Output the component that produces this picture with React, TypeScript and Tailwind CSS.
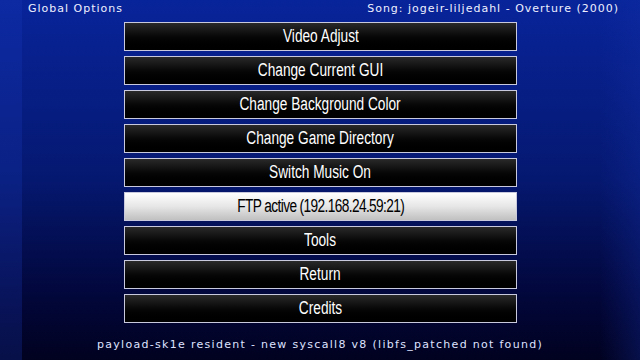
const items = [
  'Video Adjust',
  'Change Current GUI',
  'Change Background Color',
  'Change Game Directory',
  'Switch Music On',
  'FTP active (192.168.24.59:21)',
  'Tools',
  'Return',
  'Credits',
]

const selected = 5

export default function App() {
  return (
    <div className="relative w-[640px] h-[360px] overflow-hidden bg-gradient-to-b from-[#08249a] via-[#051870] to-[#010220]">
      {/* side glow */}
      <div className="absolute inset-y-0 left-0 w-[22px] bg-[#1a3cc0]/25 pointer-events-none" />
      <div className="absolute inset-y-0 right-0 w-[40px] bg-gradient-to-l from-[#1430a8]/30 to-transparent pointer-events-none" />
      <div className="relative flex flex-col h-full">
        <div className="flex justify-between pl-[28px] pr-[21px] pt-[1px] h-[22px] text-[11px] tracking-[1px] text-[#eef0ff] font-['DejaVu_Sans',sans-serif]">
          <span>Global Options</span>
          <span>Song: jogeir-liljedahl - Overture (2000)</span>
        </div>
        <div className="flex flex-col gap-[5px] pl-[124px] w-[517px]">
          {items.map((label, i) => (
            <div
              key={label}
              className={`h-[29px] flex items-center justify-center border-[1.5px] border-[#c9c9dd] ${
                i === selected
                  ? 'bg-gradient-to-b from-[#ffffff] via-[#e6e6e6] to-[#c0c0c0] text-black'
                  : 'bg-gradient-to-b from-[#2a2a2a] via-[#080808] to-[#000000] text-white'
              }`}
            >
              <span
                className={`inline-block whitespace-nowrap scale-x-[0.76] text-[18px] font-['Liberation_Sans',sans-serif] ${
                  i === selected ? 'tracking-[-0.8px]' : ''
                }`}
              >
                {label}
              </span>
            </div>
          ))}
        </div>
        <div className="mt-[14px] text-center text-[11px] tracking-[1.3px] text-[#dfe2ff] font-['DejaVu_Sans',sans-serif]">
          payload-sk1e resident - new syscall8 v8 (libfs_patched not found)
        </div>
      </div>
    </div>
  )
}
